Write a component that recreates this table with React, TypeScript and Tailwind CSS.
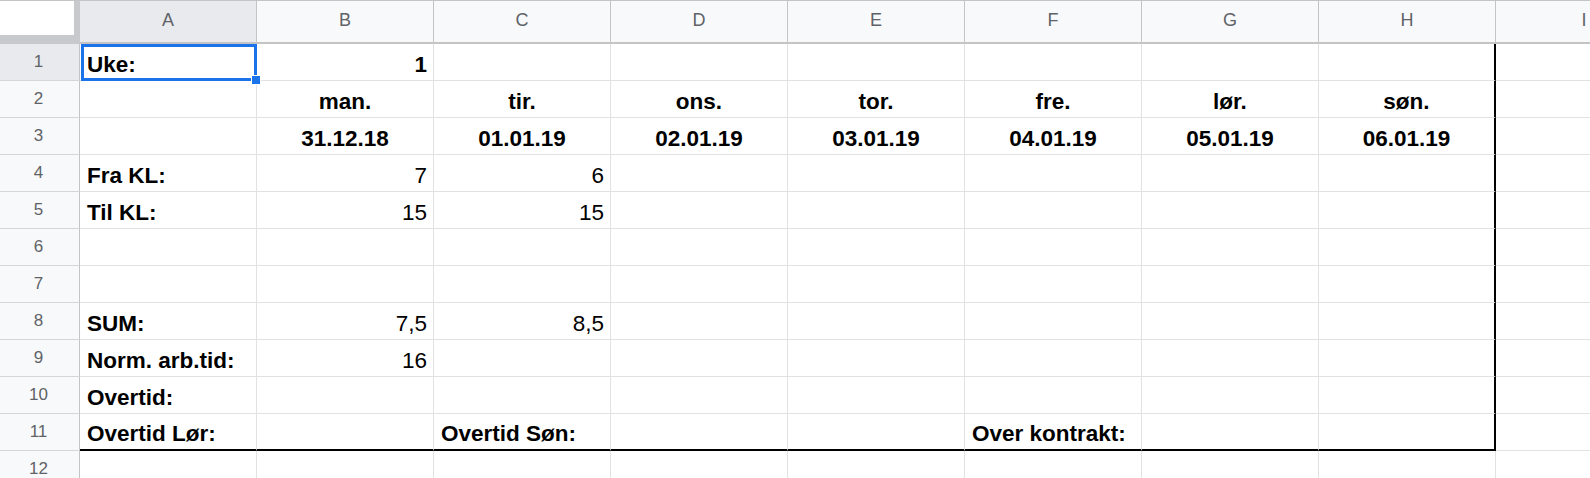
type Align = "left" | "center" | "right";
interface Cell {
  text?: string;
  align?: Align;
  bold?: boolean;
}

const columns = ["A", "B", "C", "D", "E", "F", "G", "H", "I"];

const days = ["man.", "tir.", "ons.", "tor.", "fre.", "lør.", "søn."];
const dates = [
  "31.12.18",
  "01.01.19",
  "02.01.19",
  "03.01.19",
  "04.01.19",
  "05.01.19",
  "06.01.19",
];

const label = (text: string): Cell => ({ text, align: "left", bold: true });
const num = (text: string, bold = false): Cell => ({
  text,
  align: "right",
  bold,
});

const rows: Cell[][] = [
  [label("Uke:"), num("1", true)],
  [{}, ...days.map((d) => ({ text: d, align: "center" as Align, bold: true }))],
  [{}, ...dates.map((d) => ({ text: d, align: "center" as Align, bold: true }))],
  [label("Fra KL:"), num("7"), num("6")],
  [label("Til KL:"), num("15"), num("15")],
  [],
  [],
  [label("SUM:"), num("7,5"), num("8,5")],
  [label("Norm. arb.tid:"), num("16")],
  [label("Overtid:")],
  [label("Overtid Lør:"), {}, label("Overtid Søn:"), {}, {}, label("Over kontrakt:")],
  [],
];

const alignClass: Record<Align, string> = {
  left: "justify-start pl-[7px]",
  center: "justify-center",
  right: "justify-end pr-[6px]",
};

export default function App() {
  return (
    <div className="h-[478px] w-[1590px] overflow-hidden bg-white font-['Liberation_Sans',Arial,sans-serif] text-black">
      {/* column headers */}
      <div className="flex h-[44px] border-t border-[#c4c4c4]">
        <div className="flex w-[80px] shrink-0 flex-col bg-[#c7c9cc]">
          <div className="h-[34px] w-[74px] bg-white" />
        </div>
        {columns.map((col, i) => (
          <div
            key={col}
            className={`flex h-full w-[177px] shrink-0 items-center justify-center border-r border-b-2 border-[#c4c4c4] pb-[2px] text-[18px] text-[#5f6368] ${
              i === 0 ? "bg-[#e8eaed]" : "bg-[#f8f9fa]"
            }`}
          >
            {col}
          </div>
        ))}
      </div>

      {rows.map((row, r) => (
        <div key={r} className="flex h-[37px]">
          <div
            className={`flex w-[80px] shrink-0 items-center justify-center border-r border-b border-r-[#c4c4c4] border-b-[#d6d6d6] pr-[2px] text-[17px] text-[#5f6368] ${
              r === 0 ? "bg-[#e8eaed]" : "bg-[#f8f9fa]"
            }`}
          >
            {r + 1}
          </div>
          {columns.map((col, c) => {
            const cell = row[c] ?? {};
            const edgeRight = c === 7 && r <= 10;
            const edgeBottom = r === 10 && c <= 7;
            return (
              <div
                key={col}
                className={`relative flex w-[177px] shrink-0 items-end whitespace-nowrap pb-[3px] text-[22.5px] leading-[24px] ${
                  alignClass[cell.align ?? "left"]
                } ${cell.bold ? "font-bold" : ""} ${
                  edgeRight
                    ? "border-r-2 border-r-black"
                    : "border-r border-r-[#e2e2e2]"
                } ${
                  edgeBottom
                    ? "border-b-2 border-b-black"
                    : "border-b border-b-[#e2e2e2]"
                }`}
              >
                {cell.text}
                {r === 0 && c === 0 && (
                  <>
                    <div className="absolute left-px top-0 -right-px -bottom-px z-10 border-[3px] border-[#1a73e8]" />
                    <div className="absolute -right-[5px] -bottom-[5px] z-20 h-[10px] w-[10px] border border-white bg-[#1a73e8]" />
                  </>
                )}
              </div>
            );
          })}
        </div>
      ))}
    </div>
  );
}
